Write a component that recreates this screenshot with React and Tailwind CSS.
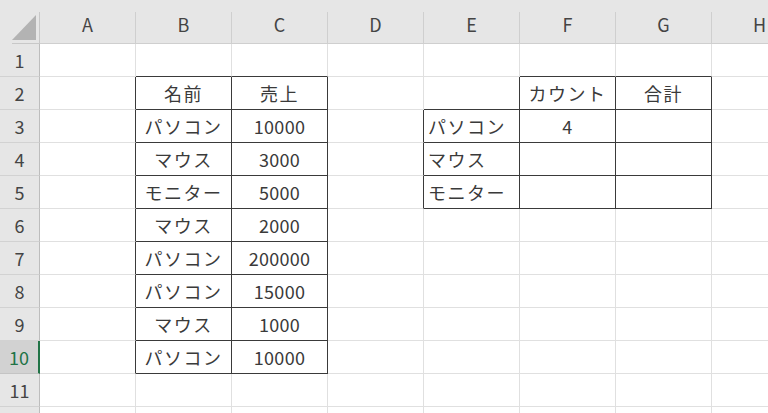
import React from "react";

const COLS = ["A", "B", "C", "D", "E", "F", "G", "H"];
const NROWS = 12;

const data = {
  "2,2": ["名前", "c"], "2,3": ["売上", "c"], "2,6": ["カウント", "c"], "2,7": ["合計", "c"],
  "3,2": ["パソコン", "c"], "3,3": ["10000", "c"], "3,5": ["パソコン", "l"], "3,6": ["4", "c"],
  "4,2": ["マウス", "c"], "4,3": ["3000", "c"], "4,5": ["マウス", "l"],
  "5,2": ["モニター", "c"], "5,3": ["5000", "c"], "5,5": ["モニター", "l"],
  "6,2": ["マウス", "c"], "6,3": ["2000", "c"],
  "7,2": ["パソコン", "c"], "7,3": ["200000", "c"],
  "8,2": ["パソコン", "c"], "8,3": ["15000", "c"],
  "9,2": ["マウス", "c"], "9,3": ["1000", "c"],
  "10,2": ["パソコン", "c"], "10,3": ["10000", "c"],
};

function inTable(r, c) {
  if (r >= 2 && r <= 10 && (c === 2 || c === 3)) return true;
  if (r === 2 && (c === 6 || c === 7)) return true;
  if (r >= 3 && r <= 5 && c >= 5 && c <= 7) return true;
  return false;
}

const font = { fontFamily: '"Noto Sans CJK JP", "Noto Sans", sans-serif' };

export default function App() {
  const cells = [];
  cells.push(
    <div key="corner" className="relative bg-[#e6e6e6]">
      <div className="absolute right-0 bottom-0 w-[28px] h-[32px] border-r border-b border-[#c8c8c8]" />
      <svg className="absolute left-0 top-0" width="40" height="44">
        <polygon points="36,15 36,40 12,40" fill="#b3b3b3" />
      </svg>
    </div>
  );
  COLS.forEach((L) => {
    cells.push(
      <div key={"h" + L} className="bg-[#e6e6e6] flex items-end">
        <div className="w-full h-[32px] border-r border-b border-[#cfcfcf] flex items-center justify-center text-[18px] text-[#444]">
          <span className="-mt-[6px]">{L}</span>
        </div>
      </div>
    );
  });
  for (let r = 1; r <= NROWS; r++) {
    const sel = r === 10;
    cells.push(
      <div
        key={"r" + r}
        className={
          sel
            ? "bg-[#d2d2d2] border-b border-[#c4c4c4] border-r-2 border-r-[#217346] flex items-center justify-center text-[18px] text-[#217346]"
            : "bg-[#e6e6e6] border-b border-[#d2d2d2] border-r border-r-[#bdbdbd] flex items-center justify-center text-[18px] text-[#444]"
        }
      >
        {r < NROWS ? r : null}
      </div>
    );
    for (let c = 1; c <= 8; c++) {
      const darkR = inTable(r, c) || inTable(r, c + 1);
      const darkB = inTable(r, c) || inTable(r + 1, c);
      const d = data[r + "," + c];
      const isNum = d && /^[0-9]+$/.test(d[0]);
      cells.push(
        <div
          key={r + "-" + c}
          className={
            "bg-white border-r border-b flex items-center text-[18px] text-[#3a3a3a] whitespace-nowrap overflow-visible " +
            (darkR ? "border-r-[#3a3a3a] " : "border-r-[#e0e0e0] ") +
            (darkB ? "border-b-[#3a3a3a] " : "border-b-[#e0e0e0] ") +
            (d && d[1] === "l" ? "justify-start pl-[4px]" : "justify-center")
          }
        >
          {d ? (
            <span className={isNum ? "tracking-[0.3px]" : "tracking-[1.5px]"}>{d[0]}</span>
          ) : null}
        </div>
      );
    }
  }
  return (
    <div className="w-[768px] h-[413px] overflow-hidden bg-white" style={font}>
      <div className="grid grid-cols-[40px_repeat(8,96px)] grid-rows-[44px_repeat(12,33px)]">
        {cells}
      </div>
    </div>
  );
}
